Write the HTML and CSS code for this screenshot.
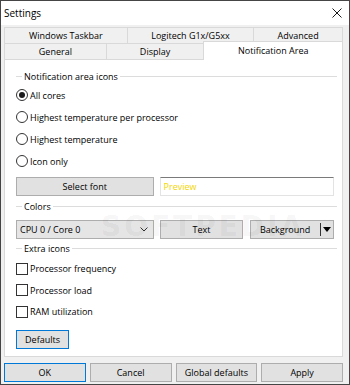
FILE: index.html
```html
<!DOCTYPE html>
<html lang="en">
<head>
    <meta charset="UTF-8">
    <meta name="viewport" content="width=device-width, initial-scale=1.0">
    <title>Settings</title>
    <link rel="stylesheet" href="styles.css">
</head>
<body>

    <div class="window">
        <div class="titlebar">
            <span class="title">Settings</span>
            <svg class="close" width="10" height="10" viewBox="0 0 10 10">
                <path d="M0.5 0.5 L9.5 9.5 M9.5 0.5 L0.5 9.5" stroke="#1a1a1a" stroke-width="1" fill="none"/>
            </svg>
        </div>

        <div class="content">
            <!-- two rows of tabs, selected row sits at the bottom -->
            <div class="tabs">
                <div class="tab-row">
                    <div class="tab tab-taskbar">Windows Taskbar</div>
                    <div class="tab tab-logitech">Logitech G1x/G5xx</div>
                    <div class="tab tab-advanced">Advanced</div>
                </div>
                <div class="tab-row">
                    <div class="tab tab-general">General</div>
                    <div class="tab tab-display">Display</div>
                    <div class="tab tab-notify selected">Notification Area</div>
                </div>
            </div>

            <div class="panel">
                <div class="group-title"><span>Notification area icons</span></div>

                <div class="options">
                    <div class="option"><span class="radio checked"></span>All cores</div>
                    <div class="option"><span class="radio"></span>Highest temperature per processor</div>
                    <div class="option"><span class="radio"></span>Highest temperature</div>
                    <div class="option"><span class="radio"></span>Icon only</div>
                </div>

                <div class="font-row">
                    <div class="btn select-font">Select font</div>
                    <div class="preview">Preview</div>
                </div>

                <div class="group-title colors-title"><span>Colors</span></div>

                <div class="color-row">
                    <div class="combo">
                        <span>CPU 0 / Core 0</span>
                        <svg width="8" height="5" viewBox="0 0 8 5">
                            <path d="M0.5 0.5 L4 4 L7.5 0.5" stroke="#333" stroke-width="1" fill="none"/>
                        </svg>
                    </div>
                    <div class="btn text-btn">Text</div>
                    <div class="btn split-btn">
                        <span class="split-label">Background</span>
                        <span class="split-arrow"></span>
                    </div>
                </div>

                <div class="group-title extra-title"><span>Extra icons</span></div>

                <div class="checks">
                    <div class="option"><span class="checkbox"></span>Processor frequency</div>
                    <div class="option"><span class="checkbox"></span>Processor load</div>
                    <div class="option"><span class="checkbox"></span>RAM utilization</div>
                </div>

                <div class="btn default defaults-btn">Defaults</div>

                <div class="watermark">SOFTPEDIA</div>
            </div>

            <div class="footer">
                <div class="btn default">OK</div>
                <div class="btn">Cancel</div>
                <div class="btn">Global defaults</div>
                <div class="btn">Apply</div>
            </div>
        </div>
    </div>

</body>
</html>
```

FILE: styles.css
```css
* {
    box-sizing: border-box;
}
body {
    margin: 0;
    font-family: "Open Sans", "Noto Sans", sans-serif;
    font-size: 9px;
    color: #000;
    background: #fff;
}
.window {
    width: 350px;
    height: 385px;
    border: 1px solid #454545;
    background-color: #f0f0f0;
    display: flex;
    flex-direction: column;
}
.titlebar {
    height: 24px;
    background-color: #fff;
    display: flex;
    align-items: center;
    justify-content: space-between;
    padding: 0 7px 0 3px;
}
.title {
    font-size: 10px;
}
.close {
    display: block;
}
.content {
    padding: 2px 6px 0 3px;
}

/* tabs */
.tab-row {
    display: flex;
    height: 16px;
}
.tab {
    height: 16px;
    border: 1px solid #d9d9d9;
    border-bottom: none;
    margin-left: -1px;
    display: flex;
    align-items: center;
    justify-content: center;
    background-color: #f0f0f0;
}
.tab:first-child {
    margin-left: 0;
}
.tab-taskbar { width: 124px; }
.tab-logitech { width: 128px; }
.tab-advanced { width: 90px; }
.tab-general { width: 103px; }
.tab-display { width: 99px; }
.tab-notify { width: 140px; }
.tab.selected {
    background-color: #fff;
    height: 19px;
    margin-top: -2px;
    position: relative;
    z-index: 1;
    padding-bottom: 2px;
}

.panel {
    position: relative;
    width: 339px;
    height: 298px;
    background-color: #fff;
    border: 1px solid #d9d9d9;
    padding: 9px 8px 0 11px;
}

/* group box headings */
.group-title {
    height: 14px;
    display: flex;
    align-items: center;
    margin-right: -3px;
}
.group-title::before {
    content: "";
    width: 6px;
    border-top: 1px solid #dcdcdc;
}
.group-title::after {
    content: "";
    flex: 1;
    border-top: 1px solid #dcdcdc;
}
.group-title span {
    padding: 0 2px;
}

.options {
    margin-top: 1px;
}
.option {
    height: 22px;
    display: flex;
    align-items: center;
}
.checks {
    margin-top: 3px;
}
.checks .option {
    height: 21.5px;
}
.radio {
    width: 12px;
    height: 12px;
    border: 1px solid #333;
    border-radius: 50%;
    margin-right: 2px;
    display: flex;
    align-items: center;
    justify-content: center;
}
.radio.checked::after {
    content: "";
    width: 6px;
    height: 6px;
    border-radius: 50%;
    background-color: #1a1a1a;
}
.checkbox {
    width: 12px;
    height: 12px;
    border: 1px solid #333;
    margin-right: 2px;
}

/* buttons */
.btn {
    height: 19px;
    background-color: #e1e1e1;
    border: 1px solid #adadad;
    display: flex;
    align-items: center;
    justify-content: center;
}
.btn.default {
    border-color: #0078d7;
}

.font-row {
    display: flex;
    margin-top: 5px;
}
.select-font {
    width: 138px;
}
.preview {
    width: 175px;
    height: 19px;
    margin-left: 6px;
    border: 1px solid #e3e3e3;
    border-top-color: #7a7a7a;
    color: #f2d600;
    padding-left: 3px;
    display: flex;
    align-items: center;
}

.colors-title {
    margin-top: 3px;
}
.color-row {
    display: flex;
    margin-top: 7px;
}
.combo {
    width: 138px;
    height: 19px;
    background-color: #e5e5e5;
    border: 1px solid #adadad;
    display: flex;
    align-items: center;
    justify-content: space-between;
    padding: 0 5px 0 3px;
}
.combo svg {
    display: block;
}
.text-btn {
    width: 84px;
    margin-left: 6px;
}
.split-btn {
    width: 84px;
    margin-left: 7px;
    justify-content: space-between;
    padding-right: 2px;
}
.split-label {
    flex: 1;
    text-align: center;
    border-right: 1px solid #333;
    line-height: 13px;
    padding-right: 1px;
}
.split-arrow {
    width: 0;
    height: 0;
    margin-left: 2px;
    border-left: 4px solid transparent;
    border-right: 4px solid transparent;
    border-top: 5px solid #000;
}

.extra-title {
    margin-top: 2px;
}
.defaults-btn {
    width: 53px;
    margin-top: 7.5px;
}

.watermark {
    position: absolute;
    left: 96px;
    top: 150px;
    font-family: "DejaVu Sans", sans-serif;
    font-size: 28px;
    font-weight: bold;
    letter-spacing: 3px;
    color: rgba(0, 0, 0, 0.05);
    pointer-events: none;
}

.footer {
    display: grid;
    grid-template-columns: repeat(4, 1fr);
    gap: 4px;
    width: 339px;
    margin-top: 6px;
}
```
